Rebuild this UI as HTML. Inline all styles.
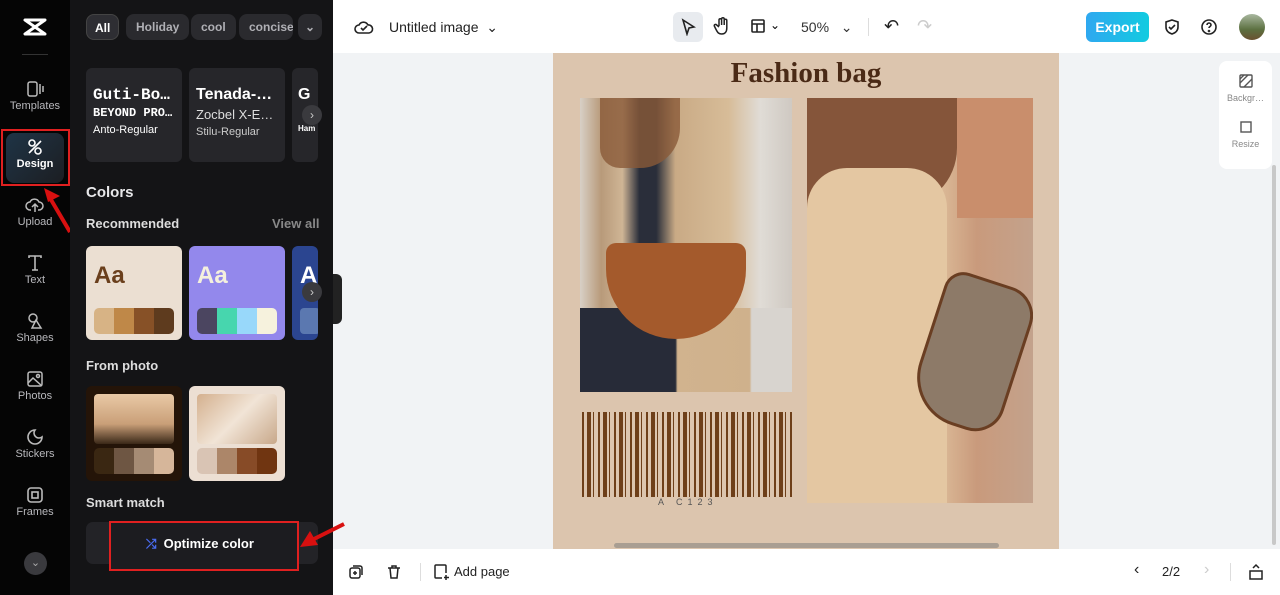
<!DOCTYPE html>
<html><head><meta charset="utf-8"><style>
*{box-sizing:border-box;margin:0;padding:0}
body{width:1280px;height:595px;overflow:hidden;font-family:"Liberation Sans",sans-serif;background:#f1f3f5;position:relative}
.abs{position:absolute}
.rail{left:0;top:0;width:70px;height:595px;background:#050505}
.rl{position:absolute;left:0;width:70px;text-align:center;color:#b8b8bc;font-size:11px}
.rl svg{display:block;margin:0 auto 2px}
.panel{left:70px;top:0;width:263px;height:595px;background:#141416}
.chip{position:absolute;top:14px;height:26px;border-radius:8px;background:#2a2a2e;color:#b0b0b5;font-size:12px;font-weight:bold;line-height:26px;padding:0 10px}
.h{position:absolute;color:#e8e8ea;font-weight:bold}
.card{position:absolute;border-radius:6px}
.sw{position:absolute;left:8px;right:8px;height:26px;border-radius:5px;overflow:hidden;display:flex}
.sw i{flex:1}
.top{left:333px;top:0;width:947px;height:53px;background:#fff}
.bot{left:333px;top:549px;width:947px;height:46px;background:#fff}
</style></head><body>
<div class="abs rail">
 <svg class="abs" style="left:23px;top:18px" width="24" height="18" viewBox="0 0 24 18" fill="none" stroke="#fff" stroke-width="3" stroke-linejoin="round"><path d="M2 2h20L2 16h20z"/></svg>
 <div class="abs" style="left:22px;top:54px;width:26px;height:1px;background:#333"></div>
 <div class="rl" style="top:80px"><svg width="20" height="18" viewBox="0 0 20 18" fill="none" stroke="#bbb" stroke-width="1.5"><rect x="3" y="2" width="9" height="14" rx="2"/><path d="M15 4v10M18 6v6"/></svg>Templates</div>
 <div class="abs" style="left:6px;top:133px;width:58px;height:50px;border-radius:8px;background:linear-gradient(135deg,#1f3446,#1c1e22)"></div>
 <div class="abs" style="left:1px;top:129px;width:69px;height:57px;border:2px solid #e02020"></div>
 <div class="rl" style="top:138px;color:#fff;font-weight:bold"><svg width="18" height="18" viewBox="0 0 18 18" fill="none" stroke="#fff" stroke-width="1.6"><circle cx="6" cy="5" r="3"/><circle cx="12" cy="13" r="3"/><path d="M3 15L15 3M9 9l-5 5"/></svg>Design</div>
 <div class="rl" style="top:196px"><svg width="20" height="18" viewBox="0 0 20 18" fill="none" stroke="#bbb" stroke-width="1.5"><path d="M6 14H5a4 4 0 010-8 5 5 0 019 0 4 4 0 010 8h-1M10 16V8M7 11l3-3 3 3"/></svg>Upload</div>
 <svg class="abs" style="left:40px;top:186px" width="34" height="50"><path d="M30 46L10 12" stroke="#d81010" stroke-width="4"/><path d="M4 2l16 8-12 6z" fill="#d81010"/></svg>
 <div class="rl" style="top:254px"><svg width="18" height="18" viewBox="0 0 18 18" fill="none" stroke="#bbb" stroke-width="1.6"><path d="M3 4V2h12v2M9 2v14M6 16h6"/></svg>Text</div>
 <div class="rl" style="top:312px"><svg width="18" height="18" viewBox="0 0 18 18" fill="none" stroke="#bbb" stroke-width="1.5"><circle cx="7" cy="6" r="4"/><path d="M10 8l5 8H6z"/></svg>Shapes</div>
 <div class="rl" style="top:370px"><svg width="18" height="18" viewBox="0 0 18 18" fill="none" stroke="#bbb" stroke-width="1.5"><rect x="2" y="2" width="14" height="14" rx="2"/><path d="M2 13l5-5 9 8"/><circle cx="12" cy="6" r="1.5"/></svg>Photos</div>
 <div class="rl" style="top:428px"><svg width="18" height="18" viewBox="0 0 18 18" fill="none" stroke="#bbb" stroke-width="1.6"><path d="M9 2a7 7 0 107 7 5 5 0 01-7-7z"/></svg>Stickers</div>
 <div class="rl" style="top:486px"><svg width="18" height="18" viewBox="0 0 18 18" fill="none" stroke="#bbb" stroke-width="1.6"><rect x="2" y="2" width="14" height="14" rx="3"/><rect x="6" y="6" width="6" height="6"/></svg>Frames</div>
 <div class="abs" style="left:24px;top:552px;width:23px;height:23px;border-radius:50%;background:#3a3a3e;color:#aaa;font-size:11px;text-align:center;line-height:23px">⌄</div>
</div>
<div class="abs panel">
 <div class="chip" style="left:16px;background:#2e2e33;color:#fff;border:1px solid #444;padding:0 8px">All</div>
 <div class="chip" style="left:56px">Holiday</div>
 <div class="chip" style="left:121px">cool</div>
 <div class="chip" style="left:169px;width:54px;overflow:hidden">concise</div>
 <div class="chip" style="left:228px;width:24px;padding:0;text-align:center">⌄</div>
 <div class="card" style="left:16px;top:68px;width:96px;height:94px;background:#26262a;color:#fff;padding:18px 7px">
  <div style="font-family:'Liberation Mono',monospace;font-size:16px;font-weight:bold">Guti-Bo…</div>
  <div style="font-family:'Liberation Mono',monospace;font-size:12px;font-weight:bold;margin-top:2px">BEYOND PRO…</div>
  <div style="font-size:11px;margin-top:4px">Anto-Regular</div></div>
 <div class="card" style="left:119px;top:68px;width:96px;height:94px;background:#26262a;color:#fff;padding:18px 7px">
  <div style="font-size:16px;font-weight:bold">Tenada-…</div>
  <div style="font-size:13px;margin-top:3px;color:#ddd">Zocbel X-E…</div>
  <div style="font-size:11px;margin-top:4px;color:#ccc">Stilu-Regular</div></div>
 <div class="card" style="left:222px;top:68px;width:26px;height:94px;background:#26262a;color:#fff;padding:18px 6px;overflow:hidden;font-weight:bold;font-size:16px">G<div style="font-size:8px;margin-top:20px">Ham</div></div>
 <div class="abs" style="left:232px;top:105px;width:20px;height:20px;border-radius:50%;background:#3a3a3e;color:#ccc;font-size:12px;text-align:center;line-height:20px">›</div>
 <div class="h" style="left:16px;top:184px;font-size:15px">Colors</div>
 <div class="h" style="left:16px;top:216px;font-size:13px;color:#ddd">Recommended</div>
 <div class="abs" style="left:202px;top:216px;font-size:13px;color:#888;font-weight:bold">View all</div>
 <div class="card" style="left:16px;top:246px;width:96px;height:94px;background:#ebdfd2"><div style="position:absolute;left:8px;top:16px;font-size:24px;font-weight:bold;color:#6a3f1c">Aa</div><div class="sw" style="top:62px"><i style="background:#d7b385"></i><i style="background:#bf8848"></i><i style="background:#875127"></i><i style="background:#5e3b1e"></i></div></div>
 <div class="card" style="left:119px;top:246px;width:96px;height:94px;background:#9388ec"><div style="position:absolute;left:8px;top:16px;font-size:24px;font-weight:bold;color:#f4f0dd">Aa</div><div class="sw" style="top:62px"><i style="background:#4b4560"></i><i style="background:#47d6ae"></i><i style="background:#98d8fa"></i><i style="background:#f6f2dd"></i></div></div>
 <div class="card" style="left:222px;top:246px;width:26px;height:94px;background:#2b4590;overflow:hidden"><div style="position:absolute;left:8px;top:16px;font-size:24px;font-weight:bold;color:#fff">A</div><div style="position:absolute;left:8px;top:62px;width:20px;height:26px;background:#5b78b0;border-radius:4px"></div></div>
 <div class="abs" style="left:232px;top:282px;width:20px;height:20px;border-radius:50%;background:#3a3a3e;color:#ccc;font-size:12px;text-align:center;line-height:20px">›</div>
 <div class="h" style="left:16px;top:358px;font-size:13px;color:#ddd">From photo</div>
 <div class="card" style="left:16px;top:386px;width:96px;height:95px;background:#241408"><div style="position:absolute;left:8px;top:8px;right:8px;height:50px;border-radius:4px;background:linear-gradient(180deg,#e9c9a6,#c99f78 60%,#3a2818)"></div><div class="sw" style="top:62px"><i style="background:#3a2712"></i><i style="background:#6e5643"></i><i style="background:#a58b74"></i><i style="background:#d6b69a"></i></div></div>
 <div class="card" style="left:119px;top:386px;width:96px;height:95px;background:#ecdfd3"><div style="position:absolute;left:8px;top:8px;right:8px;height:50px;border-radius:4px;background:linear-gradient(135deg,#d4b08e,#f1e4d6 50%,#c8a88a)"></div><div class="sw" style="top:62px"><i style="background:#d9c4b4"></i><i style="background:#ac8669"></i><i style="background:#874b27"></i><i style="background:#703511"></i></div></div>
 <div class="h" style="left:16px;top:495px;font-size:13px;color:#ddd">Smart match</div>
 <div class="abs" style="left:16px;top:522px;width:232px;height:42px;border-radius:7px;background:#232327"></div>
 <div class="abs" style="left:39px;top:521px;width:190px;height:50px;border:2px solid #e02020;background:#1c1c20"></div>
 <div class="abs" style="left:76px;top:536px;color:#fff;font-size:13px;font-weight:bold"><span style="color:#4a6cf0">⤮</span>&nbsp; Optimize color</div>
</div>
<svg class="abs" style="left:298px;top:520px" width="50" height="32"><path d="M46 4L14 20" stroke="#d81010" stroke-width="4"/><path d="M2 27l10-16 8 14z" fill="#d81010"/></svg>
<div class="abs" style="left:333px;top:274px;width:9px;height:50px;background:#222;border-radius:0 6px 6px 0"></div>
<div class="abs top">
 <svg class="abs" style="left:21px;top:18px" width="20" height="18" viewBox="0 0 20 18" fill="none" stroke="#222" stroke-width="1.6"><path d="M5 15H5a4 4 0 010-8 5 5 0 019 0 4 4 0 011 8z"/><path d="M7 10l2 2 4-4"/></svg>
 <div class="abs" style="left:56px;top:19px;font-size:14px;color:#222">Untitled image &nbsp;⌄</div>
 <div class="abs" style="left:340px;top:12px;width:30px;height:30px;border-radius:6px;background:#e8ebef"></div>
 <svg class="abs" style="left:347px;top:18px" width="16" height="18"><path d="M3 2l11 7-5 1-2 6z" fill="none" stroke="#222" stroke-width="1.6"/></svg>
 <svg class="abs" style="left:380px;top:16px" width="18" height="20" fill="none" stroke="#222" stroke-width="1.5"><path d="M6 10V4a1.3 1.3 0 012.6 0v5V3a1.3 1.3 0 012.6 0v6V4.5a1.3 1.3 0 012.6 0V12c0 4-2 6-5 6s-4-1-6-5l-1.5-3a1.3 1.3 0 012.2-1.2L6 11"/></svg>
 <svg class="abs" style="left:417px;top:18px" width="16" height="16" fill="none" stroke="#222" stroke-width="1.6"><rect x="2" y="2" width="12" height="12" rx="1"/><path d="M2 6h12M7 6v8"/></svg>
 <div class="abs" style="left:437px;top:18px;font-size:12px">⌄</div>
 <div class="abs" style="left:468px;top:19px;font-size:14px;color:#333">50% &nbsp;&nbsp;⌄</div>
 <div class="abs" style="left:535px;top:18px;width:1px;height:18px;background:#ddd"></div>
 <div class="abs" style="left:551px;top:16px;font-size:18px;color:#222">↶</div>
 <div class="abs" style="left:584px;top:16px;font-size:18px;color:#ccc">↷</div>
 <div class="abs" style="left:753px;top:12px;width:63px;height:30px;border-radius:6px;background:linear-gradient(90deg,#2fa8f0,#12cbe0);color:#fff;font-weight:bold;font-size:14px;text-align:center;line-height:30px">Export</div>
 <svg class="abs" style="left:830px;top:18px" width="18" height="18" fill="none" stroke="#222" stroke-width="1.6"><path d="M9 2l6 2v5c0 4-3 6-6 7-3-1-6-3-6-7V4z"/><path d="M6 9l2 2 4-4"/></svg>
 <svg class="abs" style="left:867px;top:18px" width="18" height="18" fill="none" stroke="#222" stroke-width="1.6"><circle cx="9" cy="9" r="7"/><path d="M7 7a2 2 0 114 0c0 1.5-2 1.5-2 3"/><circle cx="9" cy="13" r=".5"/></svg>
 <div class="abs" style="left:906px;top:14px;width:26px;height:26px;border-radius:50%;background:linear-gradient(180deg,#a9b8a0,#5c7040 60%,#6a5030)"></div>
</div>
<div class="abs" style="left:1219px;top:61px;width:53px;height:108px;border-radius:8px;background:#fff;text-align:center;font-size:9px;color:#888">
 <svg style="display:block;margin:12px auto 4px" width="16" height="16" fill="none" stroke="#555" stroke-width="1.4"><rect x="2" y="2" width="12" height="12" rx="1"/><path d="M2 10l8-8M6 14l8-8M2 6l4-4"/></svg>Backgr…
 <svg style="display:block;margin:16px auto 4px" width="16" height="16" fill="none" stroke="#555" stroke-width="1.4"><rect x="3" y="3" width="10" height="10"/></svg>Resize</div>
<div class="abs" style="left:1272px;top:165px;width:4px;height:380px;background:#c8c8c8;border-radius:2px"></div>
<div class="abs" style="left:553px;top:53px;width:506px;height:496px;background:#dcc5ae">
 <div class="abs" style="left:0;width:506px;top:4px;text-align:center;font-family:'Liberation Serif',serif;font-weight:bold;font-size:29px;color:#4a2a16">Fashion bag</div>
 <div class="abs" style="left:27px;top:45px;width:212px;height:294px;overflow:hidden;background:linear-gradient(90deg,#d8d0c6 0%,#b89a7a 10%,#cfb595 20%,#2a2e3a 28%,#2a2e3a 36%,#c9aa85 45%,#d7bc98 70%,#e0dcd6 85%,#cfc9c2 100%)">
  <div class="abs" style="left:20px;top:0;width:80px;height:70px;background:#8a5a38;border-radius:0 0 40px 20px;opacity:.8"></div>
  <div class="abs" style="left:0;top:210px;width:212px;height:84px;background:linear-gradient(90deg,#272b38 45%,#d1b38e 46%,#cfb18c 80%,#d8d4cf 81%)"></div>
  <div class="abs" style="left:26px;top:145px;width:140px;height:96px;border-radius:10px 10px 70px 70px;background:#a45a2c"></div>
 </div>
 <div class="abs" style="left:254px;top:45px;width:226px;height:405px;overflow:hidden;background:linear-gradient(90deg,#e6cba9 0%,#e0c29e 55%,#c99a7c 75%,#c3a28c 100%)">
  <div class="abs" style="left:0;top:0;width:150px;height:110px;background:#85553a;border-radius:0 0 60px 0"></div>
  <div class="abs" style="left:150px;top:0;width:76px;height:120px;background:#c98e6c"></div>
  <div class="abs" style="left:0;top:70px;width:140px;height:340px;background:#e4c7a2;border-radius:40px 40px 0 0"></div>
  <div class="abs" style="left:118px;top:180px;width:95px;height:150px;border-radius:20px 30px 30px 50px;background:#8d7a68;border:3px solid #6a3e22;transform:rotate(18deg)"></div>
 </div>
 <div class="abs" style="left:29px;top:359px;width:212px;height:85px;background:repeating-linear-gradient(90deg,#6e3f19 0 2px,transparent 2px 5px,#6e3f19 5px 9px,transparent 9px 11px,#6e3f19 11px 12px,transparent 12px 16px)"></div>
 <div class="abs" style="left:105px;top:444px;font-size:9px;color:#555;letter-spacing:5px">A C123</div>
 <div class="abs" style="left:61px;top:490px;width:385px;height:5px;border-radius:3px;background:#a99e92"></div>
</div>
<div class="abs bot">
 <svg class="abs" style="left:15px;top:15px" width="16" height="16" fill="none" stroke="#222" stroke-width="1.5"><rect x="2" y="4" width="10" height="10" rx="2"/><path d="M5 2h7a2 2 0 012 2v7M7 7v4M5 9h4"/></svg>
 <svg class="abs" style="left:53px;top:15px" width="16" height="16" fill="none" stroke="#222" stroke-width="1.5"><path d="M2 4h12M6 4V2h4v2M4 4l1 10h6l1-10"/></svg>
 <div class="abs" style="left:87px;top:14px;width:1px;height:18px;background:#ddd"></div>
 <svg class="abs" style="left:99px;top:14px" width="18" height="18" fill="none" stroke="#222" stroke-width="1.5"><path d="M10 15H4a1 1 0 01-1-1V3a1 1 0 011-1h9a1 1 0 011 1v7M14 12v5M12 14.5h5"/></svg>
 <div class="abs" style="left:121px;top:15px;font-size:13px;color:#222">Add page</div>
 <div class="abs" style="left:801px;top:12px;font-size:16px;color:#222">‹</div>
 <div class="abs" style="left:829px;top:15px;font-size:13px;color:#222">2/2</div>
 <div class="abs" style="left:871px;top:12px;font-size:16px;color:#ccc">›</div>
 <div class="abs" style="left:897px;top:14px;width:1px;height:18px;background:#ddd"></div>
 <svg class="abs" style="left:915px;top:14px" width="16" height="18" fill="none" stroke="#222" stroke-width="1.5"><rect x="2" y="8" width="12" height="8"/><path d="M5 5l3-3 3 3"/></svg>
</div>
</body></html>
